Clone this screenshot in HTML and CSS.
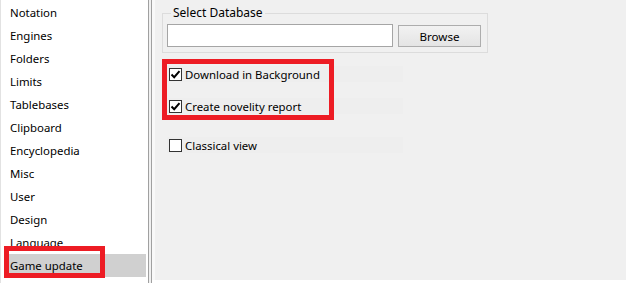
FILE: index.html
```html
<!DOCTYPE html>
<html lang="en">
<head>
    <meta charset="UTF-8">
    <title>Options - Game update</title>
    <link rel="stylesheet" href="styles.css">
</head>
<body>
    <div class="window">
        <ul class="sidebar">
            <li>Notation</li>
            <li>Engines</li>
            <li>Folders</li>
            <li>Limits</li>
            <li>Tablebases</li>
            <li>Clipboard</li>
            <li>Encyclopedia</li>
            <li>Misc</li>
            <li>User</li>
            <li>Design</li>
            <li>Language</li>
            <li class="selected">Game update</li>
        </ul>
        <div class="splitter"></div>
        <div class="panel">
            <fieldset class="group">
                <legend>Select Database</legend>
                <div class="group-row">
                    <input type="text" class="path">
                    <button type="button" class="btn">Browse</button>
                </div>
            </fieldset>

            <label class="check first">
                <span class="box checked"><svg width="11" height="11" viewBox="0 0 11 11"><path d="M1.5 5.5 L4.2 8.2 L9.5 2.2" fill="none" stroke="#000" stroke-width="2"/></svg></span>
                Download in Background
            </label>
            <label class="check second">
                <span class="box checked"><svg width="11" height="11" viewBox="0 0 11 11"><path d="M1.5 5.5 L4.2 8.2 L9.5 2.2" fill="none" stroke="#000" stroke-width="2"/></svg></span>
                Create novelity report
            </label>
            <label class="check third">
                <span class="box"></span>
                Classical view
            </label>
        </div>
    </div>

    <!-- annotation boxes drawn on top of the screenshot -->
    <div class="mark mark-list"></div>
    <div class="mark mark-checks"></div>
</body>
</html>
```

FILE: styles.css
```css
/* options dialog */
body {
    margin: 0;
    background-color: #fff;
    font-family: "Segoe UI", "Noto Sans", sans-serif;
    font-size: 11.4px;
    color: #000;
    position: relative;
    width: 626px;
    height: 283px;
    overflow: hidden;
}

.window {
    display: flex;
    height: 283px;
}

.sidebar {
    list-style: none;
    margin: 0;
    padding: 1px 0 0 0;
    flex: none;
    background-color: #fff;
    border-left: 1px solid #e2e2e2;
    border-right: 1px solid #a0a0a0;
    box-sizing: border-box;
    width: 149px;
}

.sidebar li {
    height: 23px;
    line-height: 23px;
    margin: 0 2px 0 8px;
    padding-left: 1px;
    white-space: nowrap;
}

.sidebar li.selected {
    background-color: #d0d0d0;
}

.splitter {
    width: 2px;
    flex: none;
    background-color: #f0f0f0;
    border-right: 1px solid #a0a0a0;
}

.panel {
    flex: 1;
    height: 280px;
    background-color: #f0f0f0;
    border-left: 3px solid #f8f8f8;
    padding: 5px 0 0 7px;
    box-sizing: border-box;
}

.group {
    margin: 0;
    width: 326px;
    box-sizing: border-box;
    border: 1px solid #dcdcdc;
    padding: 3px 6px 5px 4px;
}

.group legend {
    padding: 0 2px;
    margin-left: 4px;
    line-height: 16px;
    font-size: 12px;
}

.group-row {
    display: flex;
    align-items: flex-end;
    gap: 5px;
}

.path {
    width: 226px;
    height: 23px;
    box-sizing: border-box;
    margin: 0;
    border: 1px solid #a5a5a5;
    background-color: #fff;
    padding: 0 3px;
}

.btn {
    width: 83px;
    height: 22px;
    box-sizing: border-box;
    margin: 0;
    border: 1px solid #adadad;
    background: linear-gradient(#f2f2f2, #e4e4e4);
    font-family: inherit;
    font-size: 11.6px;
    color: #000;
    padding: 0;
}

.check {
    display: flex;
    align-items: center;
    width: 236px;
    height: 16px;
    margin-left: 5px;
    background-color: #eeeeee;
    white-space: nowrap;
}

.check.first { margin-top: 13px; }
.check.second { margin-top: 16px; }
.check.third { margin-top: 23px; }

.box {
    width: 13px;
    height: 13px;
    box-sizing: border-box;
    border: 1px solid #333;
    background-color: #fff;
    margin: 0 3px 0 2px;
    display: flex;
    align-items: center;
    justify-content: center;
}

.mark {
    position: absolute;
    border: 5px solid #ed1c24;
    box-sizing: border-box;
}

.mark-list {
    left: 4px;
    top: 246px;
    width: 101px;
    height: 32px;
}

.mark-checks {
    left: 162px;
    top: 59px;
    width: 172px;
    height: 61px;
}
```
